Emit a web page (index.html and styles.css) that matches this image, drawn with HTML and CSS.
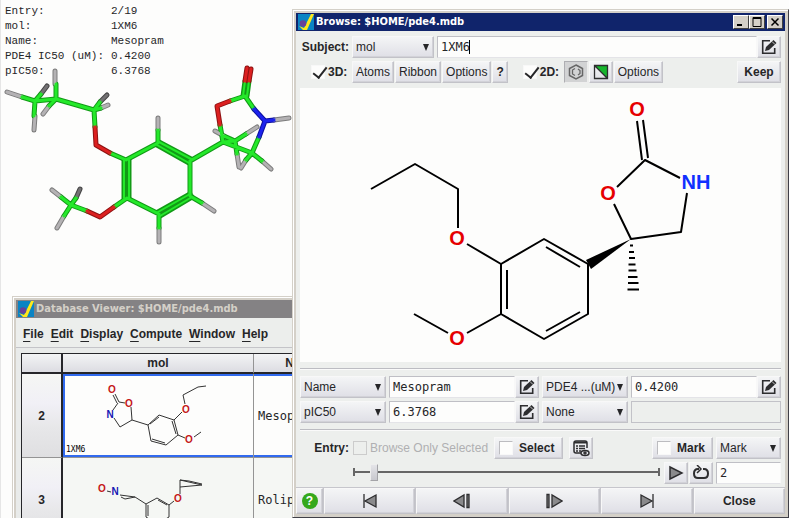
FILE: index.html
```html
<!DOCTYPE html>
<html lang="en">
<head>
<meta charset="utf-8">
<title>Browse: $HOME/pde4.mdb</title>
<link rel="stylesheet" href="styles.css">
</head>
<body>
<svg width="0" height="0" class="defs" aria-hidden="true">
  <symbol id="app" viewBox="0 0 16 16">
    <rect width="16" height="16" fill="#0a84c4"/>
    <path d="M13 0h3L9 16H5L1 12l5 2z" fill="#ffe81a"/>
    <circle cx="5" cy="9.500" r="3.300" fill="#67429a"/>
  </symbol>
  <symbol id="edit" viewBox="0 0 16 16">
    <path d="M9 1.700H1.700v12.600h12V9" fill="none" stroke="#2d2d2f" stroke-width="1.600"/>
    <path d="M4 12l1-4L12.500 1l3 3L8 11z" fill="#2d2d2f"/>
    <path d="M11 2.500l3 3" stroke="#eee" stroke-width=".8"/>
  </symbol>
</svg>

<main class="desktop">
  <svg class="scene" width="292" height="250" viewBox="0 0 292 250" role="img" aria-label="3D structure of Mesopram">
    <g class="edge">
      <path class="h" d="M7 92L22 97M34 130L35 116M55 71V84M43 114L49 106M108 105L101 108M158 118V130M214 211L202 203M159 242V228M52 190L61 197M57 228L64 216M289 118L274 120M215 131L224 136M257 127L246 134M239 167L237 154M271 169L262 161M241 168L246 160"/>
      <path class="hd" d="M47 86L41 94M107 95L100 102M80 189L76 198"/>
      <path class="c" d="M224 136L235 141L246 134M235 141L237 154M223 142L235 141M22 97L35 101L34 116M35 101L41 94M35 101L56 99L94 110L95 127M56 99V84M56 99L49 106M94 110L100 102M94 110L101 108M110 153L126 160L158 143V130M190 161V196L202 203M159 214V228M159 214L127 198L114 207M87 211L71 205L61 197M71 205L76 198M71 205L64 216M190 161L223 142L220 125M230 101L245 96L254 109M223 142L252 153L259 137M252 153L262 161M252 153L246 160"/>
      <path class="c" d="M157 145L189 163M159 142L191 159M190 194L158 212M192 197L160 216M124 160V198M129 160V198M243 96L245 81M247 96L249 81"/>
      <path class="ox" d="M95 127L96 145L110 153M114 207L100 217L87 211M220 125L217 106L230 101M245 81L247 68M249 81L251 69"/>
      <path class="ni" d="M254 109L265 121L259 137M265 121L274 120"/>
    </g>
    <g class="core">
      <path class="h" d="M7 92L22 97M34 130L35 116M55 71V84M43 114L49 106M108 105L101 108M158 118V130M214 211L202 203M159 242V228M52 190L61 197M57 228L64 216M289 118L274 120M215 131L224 136M257 127L246 134M239 167L237 154M271 169L262 161M241 168L246 160"/>
      <path class="hd" d="M47 86L41 94M107 95L100 102M80 189L76 198"/>
      <path class="c" d="M224 136L235 141L246 134M235 141L237 154M223 142L235 141M22 97L35 101L34 116M35 101L41 94M35 101L56 99L94 110L95 127M56 99V84M56 99L49 106M94 110L100 102M94 110L101 108M110 153L126 160L158 143V130M190 161V196L202 203M159 214V228M159 214L127 198L114 207M87 211L71 205L61 197M71 205L76 198M71 205L64 216M190 161L223 142L220 125M230 101L245 96L254 109M223 142L252 153L259 137M252 153L262 161M252 153L246 160"/>
      <path class="c thin" d="M157 145L189 163M159 142L191 159M190 194L158 212M192 197L160 216M124 160V198M129 160V198M243 96L245 81M247 96L249 81"/>
      <path class="ox" d="M95 127L96 145L110 153M114 207L100 217L87 211M220 125L217 106L230 101M245 81L247 68M249 81L251 69"/>
      <path class="ni" d="M254 109L265 121L259 137M265 121L274 120"/>
    </g>
  </svg>

  <dl class="readout">
    <dt>Entry:</dt><dd>2/19</dd>
    <dt>mol:</dt><dd>1XM6</dd>
    <dt>Name:</dt><dd>Mesopram</dd>
    <dt>PDE4 IC50 (uM):</dt><dd>0.4200</dd>
    <dt>pIC50:</dt><dd>6.3768</dd>
  </dl>

  <section class="window viewer">
    <header class="titlebar inactive"><svg width="16" height="16"><use href="#app"/></svg><h2>Database Viewer: $HOME/pde4.mdb</h2></header>
    <nav class="menubar">
      <button><u>F</u>ile</button><button><u>E</u>dit</button><button><u>D</u>isplay</button><button><u>C</u>ompute</button><button><u>W</u>indow</button><button><u>H</u>elp</button>
    </nav>
    <div class="sheet">
      <table>
        <thead><tr><th class="num"></th><th class="mol">mol</th><th class="name">Name</th></tr></thead>
        <tbody>
          <tr class="current">
            <th>2</th>
            <td class="mol"><svg width="189" height="82" viewBox="64 374 189 82">
              <path d="M116 393L120 401M114 394L118 402M120 401L126 402M119 402L114 409M115 417L121 426L133 419L132 406M133 419L149 424L160 414L175 419L179 434L167 444L152 440L149 424M151 423L160 416M173 420L177 433M166 442L153 438M175 419L183 411M186 403L184 394L199 386L207 385M179 434L186 437M195 436L202 431"/>
              <text x="113" y="392" class="o">O</text><text x="130" y="406" class="o">O</text><text x="111" y="417" class="n">N</text><text x="187" y="412" class="o">O</text><text x="190" y="442" class="o">O</text>
              <text x="67" y="451" class="code">1XM6</text>
            </svg></td>
            <td class="value">Mesopram</td>
          </tr>
          <tr>
            <th>3</th>
            <td class="mol"><svg width="189" height="82" viewBox="64 458 189 82">
              <path d="M108 490L112 491M121 494L136 496L147 503L158 497L170 504V516L158 523L147 516V503M122 496L126 498L136 496M149 504V515M159 499L168 504M170 504L175 500M181 493V479L203 484L181 486M181 479L190 480L203 483"/>
              <text x="103" y="491" class="o">O</text><text x="116" y="494" class="n">N</text><text x="179" y="501" class="o">O</text>
            </svg></td>
            <td class="value">Rolipram</td>
          </tr>
        </tbody>
      </table>
    </div>
  </section>

  <section class="window browser">
    <header class="titlebar">
      <svg width="16" height="16"><use href="#app"/></svg><h1>Browse: $HOME/pde4.mdb</h1>
      <button aria-label="Minimize"><svg width="12" height="10"><path d="M2 8h5" stroke="#000" stroke-width="2"/></svg></button>
      <button aria-label="Maximize"><svg width="12" height="10"><path d="M2 .500h8v9H2zM2 1.500h8" fill="none" stroke="#000"/></svg></button>
      <button class="close" aria-label="Close window"><svg width="12" height="10"><path d="M2.500 1.500l7 7m0-7l-7 7" stroke="#000" stroke-width="1.500"/></svg></button>
    </header>

    <div class="body">
      <div class="row">
        <label class="lead" for="subject">Subject:</label>
        <span class="drop subject"><select id="subject"><option>mol</option></select></span>
        <span class="field"><input id="code" aria-label="Subject value" value="1XM6"><i class="caret"></i><button aria-label="Edit subject"><svg width="16" height="16"><use href="#edit"/></svg></button></span>
      </div>

      <div class="tools">
        <label class="toggle"><input type="checkbox" checked>3D:</label>
        <button>Atoms</button><button>Ribbon</button><button>Options</button><button class="strong">?</button>
        <label class="toggle second"><input type="checkbox" checked>2D:</label>
        <button class="icon pressed" aria-label="Aromatic rings"><svg width="16" height="16" fill="none" stroke="#666" stroke-width="1.500"><path d="M8 1l6.500 3.500v7L8 15l-6.500-3.500v-7z"/><path d="M7 4.500L4.500 6v4L7 11.500M10 5l2 1.500v3L10 11" stroke-width="1.300"/></svg></button>
        <button class="icon" aria-label="Colors"><svg width="16" height="16"><path d="M1.500 1.500h13v13z" fill="#16b52c"/><path d="M1.500 1.500h13v13h-13zl13 13" fill="none" stroke="#2d2d2f" stroke-width="1.300"/></svg></button>
        <button>Options</button>
        <button class="strong keep">Keep</button>
      </div>

      <div class="canvas">
        <svg viewBox="300 88 481 274" role="img" aria-label="2D structure of Mesopram">
          <g class="bonds">
            <path d="M371 189L415 164L458 189V228M467 244L501 264L544 239L588 264V314L544 339L501 314V264M507 270V309M546 247L580 267M546 331L580 312M501 314L467 333M448 333L414 314"/>
            <path d="M637 121L642 160M643 120L648 158M617 187L645 160L680 178M614 204L631 239L681 232L687 193"/>
            <path d="M630 245.500h3M629 252h5M629 258h6M628.500 264.500h7M628.500 270.500h8M628 277h9.500M628 283h10.500M627.500 289.500h11.500"/>
          </g>
          <path d="M631 239L586 260L591 269z"/>
          <text class="o" x="457" y="245">O</text><text class="o" x="457" y="345">O</text><text class="o" x="637" y="116">O</text><text class="o" x="608" y="200">O</text><text class="n" x="696" y="189">NH</text>
        </svg>
      </div>

      <hr>
      <div class="fields">
        <span class="drop"><select aria-label="Field 1"><option>Name</option></select></span>
        <span class="field"><input aria-label="Name value" value="Mesopram"><button aria-label="Edit name"><svg width="16" height="16"><use href="#edit"/></svg></button></span>
        <span class="drop"><select aria-label="Field 2"><option>PDE4 ...(uM)</option></select></span>
        <span class="field"><input aria-label="PDE4 value" value="0.4200"><button aria-label="Edit PDE4"><svg width="16" height="16"><use href="#edit"/></svg></button></span>
        <span class="drop"><select aria-label="Field 3"><option>pIC50</option></select></span>
        <span class="field"><input aria-label="pIC50 value" value="6.3768"><button aria-label="Edit pIC50"><svg width="16" height="16"><use href="#edit"/></svg></button></span>
        <span class="drop"><select aria-label="Field 4"><option>None</option></select></span>
        <span class="field"><input aria-label="No field" disabled></span>
      </div>
      <hr>

      <div class="row entry">
        <span class="lead">Entry:</span>
        <label class="only"><input type="checkbox" disabled>Browse Only Selected</label>
        <label class="box"><input type="checkbox">Select</label>
        <button class="icon" aria-label="Show selection"><svg width="18" height="18" fill="none" stroke="#2d2d2f" stroke-width="1.500"><path d="M9 14H4q-2 0-2-2V4q0-2 2-2h9q2 0 2 2v5"/><path d="M2 3.500h13" stroke-width="2"/><path d="M4 7h2m1 0h6M4 9.500h2m1 0h6M4 12h2m1 0h2"/><ellipse cx="13" cy="14" rx="4" ry="2.500"/><circle cx="13" cy="14" r="1"/></svg></button>
        <label class="box mark"><input type="checkbox">Mark</label>
        <span class="drop side"><select aria-label="Mark filter"><option>Mark</option></select></span>
      </div>

      <div class="row scrub">
        <input type="range" min="1" max="19" value="2" aria-label="Entry position">
        <button class="icon" aria-label="Play"><svg width="16" height="16"><path d="M2 2l12 6-12 6z" fill="#8a8a8c" stroke="#2d2d2f" stroke-width="1.500"/></svg></button>
        <button class="icon" aria-label="Loop"><svg width="18" height="16"><path d="M11 4h1q4 0 4 4.500T12 13H6q-4 0-4-4.500T6 4h1" fill="none" stroke="#2d2d2f" stroke-width="2"/><path d="M5 0l4 4-4 4" fill="none" stroke="#2d2d2f" stroke-width="1.500"/></svg></button>
        <span class="field side"><input aria-label="Entry number" value="2"></span>
      </div>
    </div>

    <footer class="nav">
      <button class="help" aria-label="Help"><span>?</span></button>
      <button aria-label="First"><svg width="18" height="16"><path d="M3 1v14"/><path d="M15 2v12L4 8z"/></svg></button>
      <button aria-label="Previous"><svg width="18" height="16"><path d="M11 2v12L1 8z"/><path d="M14 1.500h2v13h-2z"/></svg></button>
      <button aria-label="Next"><svg width="18" height="16"><path d="M7 2v12l10-6z"/><path d="M2 1.500h2v13H2z"/></svg></button>
      <button aria-label="Last"><svg width="18" height="16"><path d="M15 1v14"/><path d="M3 2v12l11-6z"/></svg></button>
      <button class="strong">Close</button>
    </footer>
  </section>
</main>
</body>
</html>
```
FILE: styles.css
```css
* { box-sizing: border-box; }

body {
  margin: 0;
  background: #fdfdfc;
  color: #262628;
  font: 12px/16px "Liberation Sans", Arial, sans-serif;
}

button, select, input { margin: 0; padding: 0; border: 0; font: inherit; color: inherit; }
button svg { display: block; }
.defs { position: absolute; }

.desktop {
  position: relative;
  height: 100vh;
  overflow: hidden;
  border-left: 1px solid #e6e6e6;
}

/* Stick model */
.scene { position: absolute; left: -1px; top: 0; fill: none; stroke-linecap: round; stroke-linejoin: round; }
.edge { stroke-width: 5; }
.edge .h { stroke: #7c7c7c; }
.edge .hd { stroke: #444; }
.edge .c { stroke: #129a16; }
.edge .ox { stroke: #8e1212; }
.edge .ni { stroke: #0c10a0; }
.core { stroke-width: 3; }
.core .h { stroke: #b4b2b4; }
.core .hd { stroke: #737173; }
.core .c { stroke: #24e92a; }
.core .thin { stroke-width: 2; }
.core .ox { stroke: #dc2020; }
.core .ni { stroke: #1c22ee; }

.readout {
  position: absolute;
  left: 4px;
  top: 4px;
  margin: 0;
  display: grid;
  grid-template-columns: 106px auto;
  font: 11px/15px "Liberation Mono", monospace;
}
.readout dd { margin: 0; }

/* Window chrome */
.window {
  position: absolute;
  display: flex;
  flex-direction: column;
  padding: 3px;
  border: 1px solid #d4d0c8;
  border-right-color: #404048;
  border-bottom-color: #404048;
  background: #d4d0c8;
  box-shadow: inset 1px 1px #fff;
}
.viewer { left: 11px; top: 296px; width: 280px; height: 300px; padding-right: 0; border-right: 0; }
.browser { left: 291px; top: 9px; right: 0; bottom: 0; }

.titlebar {
  display: flex;
  align-items: center;
  height: 18px;
  padding: 0 2px;
  background: #10246b;
  color: #fff;
}
.titlebar.inactive { background: #848284; color: #d4d0c8; }
.titlebar h1, .titlebar h2 {
  flex: 1;
  margin: 0 0 0 2px;
  font: bold 11px/16px "DejaVu Sans Condensed", "DejaVu Sans", sans-serif;
  white-space: nowrap;
}
.titlebar button {
  width: 16px;
  height: 14px;
  padding: 1px;
  background: #d4d0c8;
  border: 1px solid;
  border-color: #fff #404040 #404040 #fff;
}
.titlebar .close { margin-left: 2px; }

/* Database viewer */
.menubar {
  display: flex;
  gap: 7px;
  height: 30px;
  padding: 2px 7px 0;
  background: #eceeec;
  border-bottom: 1px solid #c4c4c8;
}
.menubar button { background: none; font-weight: bold; }
.menubar u { text-underline-offset: 3px; }
.sheet { flex: 1; padding: 5px 0 0 5px; background: #e9ebea; overflow: hidden; }
table { border-collapse: separate; border-spacing: 0; table-layout: fixed; width: 329px; border: solid #26262a; border-width: 1px 0 0 1px; }
th, td { padding: 0; border-right: 1px solid #949494; border-bottom: 1px solid #949494; }
thead th { height: 20px; border-bottom: 2px solid #26262a; background: linear-gradient(#f3f4f5, #dcdce2); }
tr > th:first-child { border-right: 2px solid #26262a; }
.num { width: 41px; }
th.mol { width: 191px; }
tbody th { background: linear-gradient(#f5f6f4, #f1f0f6 35%, #e7e7e9 65%, #dfdfe1); }
tbody td { height: 84px; background: #f5f7f4; }
tbody svg { display: block; }
tbody path { fill: none; stroke: #333; stroke-width: 1; }
tbody text { font: bold 10px "Liberation Sans", sans-serif; text-anchor: middle; }
tbody .code { font: 8px "DejaVu Sans Mono", monospace; text-anchor: start; }
.current td { background: #fdfdfc; box-shadow: inset 0 2px #316aef, inset 0 -2px #316aef; }
.current td.mol { box-shadow: inset 2px 0 #316aef, inset 0 2px #316aef, inset 0 -2px #316aef; }
.value { padding-left: 4px; font: 12px/16px "DejaVu Sans Mono", monospace; }
.o { fill: #c41616; }
.n { fill: #1717b4; }

/* Browser panel */
.body { flex: 1; min-height: 0; display: flex; flex-direction: column; padding: 5px 4px 3px; background: #edefed; }
.row { display: flex; height: 22px; gap: 3px; }
.lead { width: 49px; text-align: right; font-weight: bold; line-height: 22px; }

.body button, .drop, .box, .nav button {
  background: linear-gradient(#f4f5f6, #dfdfe6);
  border: 1px solid;
  border-color: #f8f8f8 #c2c2c8 #c2c2c8 #f8f8f8;
  box-shadow: inset -1px -1px #d2d2d8;
}
.strong, .box { font-weight: bold; }
.drop { position: relative; display: block; }
.drop::after {
  content: "";
  position: absolute;
  right: 4px;
  top: 7px;
  border: solid transparent;
  border-width: 7px 3px 0;
  border-top-color: #262628;
  pointer-events: none;
}
.drop select { width: 100%; height: 100%; padding: 0 0 1px 3px; appearance: none; background: none; }
.subject { width: 82px; }

.field { position: relative; display: flex; flex: 1; min-width: 0; height: 22px; }
.row .side { flex: 0 0 65px; }
.field input {
  flex: 1;
  min-width: 0;
  padding: 0 3px;
  background: #fdfdfc;
  border: 1px solid #bfbfc5;
  border-right-color: #f8f8f8;
  border-bottom-color: #e4e4e8;
  font: 12px/16px "DejaVu Sans Mono", monospace;
}
.field input:disabled { background: #edefed; border-color: #c2c2c8; }
.field button { width: 24px; padding: 0 3px; }
.caret { position: absolute; left: 32px; top: 4px; width: 1px; height: 14px; background: #000; }

.tools { display: flex; align-items: flex-start; gap: 1px; height: 24px; margin: 3px 0; }
.tools button { height: 22px; padding: 0 3px; white-space: nowrap; }
.body .icon { flex: none; display: flex; align-items: center; justify-content: center; width: 24px; height: 22px; padding: 0; }
.body .pressed { background: #d2d3d4; border-color: #aeaeb2 #eee #eee #aeaeb2; box-shadow: none; }
.tools .keep { margin-left: auto; width: 44px; }
.toggle { display: flex; align-items: center; gap: 3px; width: 51px; height: 22px; padding-left: 11px; font-weight: bold; }
.second { width: 54px; padding-left: 14px; }

input[type="checkbox"] {
  flex: none;
  width: 14px;
  height: 14px;
  appearance: none;
  background: #fdfdfc;
  border: 1px solid;
  border-color: #bcbcc0 #f8f8f8 #f8f8f8 #bcbcc0;
}
.toggle input[type="checkbox"] { border-color: #f8f8f8; }
.toggle input::before {
  content: "";
  display: block;
  width: 6px;
  height: 12px;
  margin: -2px 0 0 4px;
  border: solid #262628;
  border-width: 0 2px 2px 0;
  rotate: 38deg;
}

.canvas { flex: 1; min-height: 0; background: #fdfdfc; }
.canvas svg { display: block; width: 100%; height: 100%; }
.canvas text { font: bold 20px "Liberation Sans", sans-serif; text-anchor: middle; }
.canvas .o { fill: #e60000; }
.canvas .n { fill: #1030ff; }
.bonds { fill: none; stroke: #000; stroke-width: 2; stroke-linejoin: round; }

hr { width: 100%; height: 2px; margin: 6px 0; border: 0; border-top: 1px solid #bcbcc2; border-bottom: 1px solid #fafafa; }
.fields { display: grid; grid-template-columns: 86px 1fr 86px 1fr; gap: 3px; }

.only { display: flex; align-items: center; gap: 3px; margin-left: 1px; color: #b0b0b2; white-space: nowrap; }
.only input { background: none; border-color: #ccc; }
.box { display: flex; align-items: center; gap: 6px; width: 69px; margin-left: 3px; padding-left: 4px; }
.entry .icon { margin-left: 3px; }
.entry .mark { width: 61px; margin-left: auto; }

.scrub { gap: 1px; margin-top: 3px; }
.scrub .side { margin-left: 2px; }
input[type="range"] {
  flex: 1;
  min-width: 0;
  height: 20px;
  margin: 0 3px 0 53px;
  appearance: none;
  background:
    linear-gradient(#666, #666) 0 50% / 2px 8px no-repeat,
    linear-gradient(#666, #666) 100% 50% / 2px 8px no-repeat,
    linear-gradient(#666, #666) 0 50% / 100% 2px no-repeat;
}
input[type="range"]::-webkit-slider-thumb {
  appearance: none;
  width: 8px;
  height: 17px;
  background: linear-gradient(#e4e4e8, #c8c8ce);
  border: 1px solid;
  border-color: #eee #a4a4a8 #a4a4a8 #eee;
}

.nav { display: grid; grid-template-columns: 27px repeat(5, 1fr); gap: 1px; height: 27px; padding-top: 1px; background: #c6c6cc; }
.nav button { display: flex; align-items: center; justify-content: center; }
.nav path { fill: #8a8a8c; stroke: #2d2d2f; stroke-width: 1.3; }
.help span { width: 16px; height: 16px; border-radius: 50%; background: #35a81c; color: #fff; font: bold 12px/16px "Liberation Sans", sans-serif; }
```
